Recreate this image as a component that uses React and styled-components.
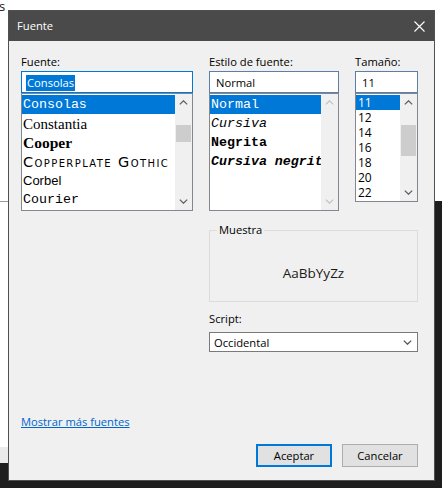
import React from 'react';
import styled, { createGlobalStyle } from 'styled-components';

const UI = '"Segoe UI", "Open Sans", "Noto Sans", sans-serif';
const MONO = '"Liberation Mono", "DejaVu Sans Mono", monospace';
const FS = 11.2;

const Global = createGlobalStyle`
  html, body { margin: 0; padding: 0; background: #fff; }
  body { font-family: ${UI}; font-size: ${FS}px; color: #000; }
`;

const Desktop = styled.div`
  position: relative;
  width: 442px;
  height: 488px;
  overflow: hidden;
  background:
    linear-gradient(#1e1e1e, #1e1e1e) 435px 201px / 7px 287px no-repeat,
    linear-gradient(#1e1e1e, #1e1e1e) 0 463px / 442px 25px no-repeat,
    linear-gradient(#ebebeb, #ebebeb) 0 447px / 8px 16px no-repeat,
    linear-gradient(#9a9a9a, #9a9a9a) 0 201px / 8px 1px no-repeat,
    #fff;
`;

const BehindText = styled.span`
  position: absolute;
  left: -1px;
  top: -3px;
  font: 13px ${UI};
  color: #111;
`;

const Dialog = styled.div`
  position: absolute;
  left: 8px;
  top: 10px;
  width: 427px;
  height: 471px;
  box-sizing: border-box;
  border: 1px solid #505050;
  background: #f0f0f0;
  display: flex;
  flex-direction: column;
`;

const TitleBar = styled.div`
  height: 30px;
  flex: none;
  background: #4a4a4a;
  color: #fff;
  display: flex;
  align-items: center;
  justify-content: space-between;
  padding: 0 9px 0 8px;
`;

const Title = styled.span`
  font-size: ${FS}px;
  line-height: 16px;
`;

const Body = styled.div`
  flex: 1;
  display: flex;
  flex-direction: column;
  padding: 13px 16px 12px 12px;
  min-height: 0;
`;

const Columns = styled.div`
  display: grid;
  grid-template-columns: 172px 130px 63px;
  column-gap: 16px;
  align-items: start;
`;

const Field = styled.div`
  display: flex;
  flex-direction: column;
`;

const Label = styled.div`
  line-height: 16px;
  height: 16px;
  margin-top: ${(p) => p.$top || 0}px;
  margin-bottom: ${(p) => (p.$gap == null ? 1 : p.$gap)}px;
  white-space: nowrap;
`;

const TextBox = styled.div`
  height: 22px;
  box-sizing: border-box;
  border: 1px solid ${(p) => (p.$focus ? '#0078d7' : '#5b7fa6')};
  background: #fff;
  display: flex;
  align-items: center;
  padding-left: ${(p) => p.$pad}px;
  padding-top: 1px;
  line-height: 16px;
  white-space: nowrap;
`;

const Hilite = styled.span`
  background: #0078d7;
  color: #fff;
  padding: 0 1px;
`;

const ListBox = styled.div`
  height: ${(p) => p.$h}px;
  box-sizing: border-box;
  border: 1px solid #828790;
  background: #fff;
  display: flex;
`;

const Items = styled.div`
  flex: 1;
  min-width: 0;
  overflow: hidden;
  padding-top: 1px;
`;

const Item = styled.div`
  height: ${(p) => p.$h}px;
  line-height: ${(p) => p.$h + 1}px;
  white-space: nowrap;
  overflow: hidden;
  padding-left: ${(p) => p.$pad}px;
  background: ${(p) => (p.$sel ? '#0078d7' : 'transparent')};
  color: ${(p) => (p.$sel ? '#fff' : '#000')};
  font-family: ${(p) => p.$family || UI};
  font-size: ${(p) => p.$size || FS}px;
  font-weight: ${(p) => p.$weight || 400};
  font-style: ${(p) => (p.$italic ? 'italic' : 'normal')};
  font-variant: ${(p) => (p.$caps ? 'small-caps' : 'normal')};
  letter-spacing: ${(p) => p.$spacing || 0}px;
`;

const ScrollBar = styled.div`
  width: 17px;
  flex: none;
  background: #f0f0f0;
  display: flex;
  flex-direction: column;
`;

const Arrow = styled.div`
  height: 17px;
  flex: none;
  display: flex;
  align-items: center;
  justify-content: center;
`;

const Track = styled.div`
  flex: 1;
  display: flex;
  flex-direction: column;
`;

const Thumb = styled.div`
  margin: ${(p) => p.$top}px 1px 0;
  height: ${(p) => p.$h}px;
  background: #cdcdcd;
`;

const RightPanel = styled.div`
  margin-left: 188px;
  width: 209px;
  display: flex;
  flex-direction: column;
`;

const Group = styled.fieldset`
  margin: 11px 0 0;
  padding: 0;
  height: 80px;
  box-sizing: border-box;
  border: 1px solid #dcdcdc;
  min-width: 0;
`;

const Legend = styled.legend`
  margin-left: 7px;
  padding: 0 2px;
  line-height: 16px;
  font-size: ${FS}px;
`;

const Sample = styled.div`
  text-align: center;
  font-size: 13.5px;
  line-height: 20px;
  padding-top: 25px;
  color: #1a1a1a;
`;

const Select = styled.div`
  height: 20px;
  box-sizing: border-box;
  border: 1px solid #7a7a7a;
  background: #fff;
  display: flex;
  align-items: center;
  justify-content: space-between;
  padding: 1px 5px 0 4px;
  line-height: 16px;
`;

const Link = styled.a`
  margin-top: auto;
  align-self: flex-start;
  color: #0066cc;
  text-decoration: underline;
  line-height: 16px;
  cursor: pointer;
`;

const Buttons = styled.div`
  display: flex;
  justify-content: flex-end;
  gap: 10px;
  margin-top: 14px;
  margin-bottom: 1px;
`;

const Button = styled.button`
  width: 76px;
  height: 23px;
  box-sizing: border-box;
  margin: 0;
  padding: 0;
  font: ${FS}px ${UI};
  color: #000;
  background: #e1e1e1;
  border: ${(p) => (p.$default ? '2px solid #0078d7' : '1px solid #adadad')};
`;

const Chevron = ({ up, color = '#606060' }) => (
  <svg width="9" height="5" viewBox="0 0 9 5">
    <path
      d={up ? 'M0.8 4.4 L4.5 0.8 L8.2 4.4' : 'M0.8 0.6 L4.5 4.2 L8.2 0.6'}
      fill="none"
      stroke={color}
      strokeWidth="1.3"
    />
  </svg>
);

const Scroll = ({ thumb, disabled }) => {
  const c = disabled ? '#c2c2c2' : '#606060';
  return (
    <ScrollBar>
      <Arrow>
        <Chevron up color={c} />
      </Arrow>
      <Track>{thumb && <Thumb $top={thumb[0]} $h={thumb[1]} />}</Track>
      <Arrow>
        <Chevron color={c} />
      </Arrow>
    </ScrollBar>
  );
};

const fonts = [
  { t: 'Consolas', $family: MONO, $size: 13.3, $sel: true },
  { t: 'Constantia', $family: '"Liberation Serif", serif', $size: 15 },
  { t: 'Cooper', $family: '"Liberation Serif", serif', $size: 15.5, $weight: 900 },
  { t: 'Copperplate Gothic', $family: '"DejaVu Sans", sans-serif', $size: 14.5, $caps: true, $spacing: 1.4 },
  { t: 'Corbel', $family: '"Liberation Sans", sans-serif', $size: 13 },
  { t: 'Courier', $family: MONO, $size: 13.3 },
];

const styles = [
  { t: 'Normal', $sel: true },
  { t: 'Cursiva', $italic: true },
  { t: 'Negrita', $weight: 700 },
  { t: 'Cursiva negrita', $italic: true, $weight: 700 },
];

const sizes = ['11', '12', '14', '16', '18', '20', '22'];

export default function App() {
  return (
    <>
      <Global />
      <Desktop>
        <BehindText>s</BehindText>
        <Dialog>
          <TitleBar>
            <Title>Fuente</Title>
            <svg width="11" height="11" viewBox="0 0 11 11">
              <path d="M0.5 0.5 L10.5 10.5 M10.5 0.5 L0.5 10.5" stroke="#fff" strokeWidth="1.1" />
            </svg>
          </TitleBar>
          <Body>
            <Columns>
              <Field>
                <Label>Fuente:</Label>
                <TextBox $focus $pad={4}>
                  <Hilite>Consolas</Hilite>
                </TextBox>
                <ListBox $h={118}>
                  <Items>
                    {fonts.map(({ t, ...p }) => (
                      <Item key={t} $h={19} $pad={1} {...p}>
                        {t}
                      </Item>
                    ))}
                  </Items>
                  <Scroll thumb={[14, 17]} />
                </ListBox>
              </Field>
              <Field>
                <Label>Estilo de fuente:</Label>
                <TextBox $pad={6}>Normal</TextBox>
                <ListBox $h={118}>
                  <Items>
                    {styles.map(({ t, ...p }) => (
                      <Item key={t} $h={19} $pad={1} $family={MONO} $size={13.3} {...p}>
                        {t}
                      </Item>
                    ))}
                  </Items>
                  <Scroll disabled />
                </ListBox>
              </Field>
              <Field>
                <Label>Tamaño:</Label>
                <TextBox $pad={6}>11</TextBox>
                <ListBox $h={109}>
                  <Items>
                    {sizes.map((s, i) => (
                      <Item key={s} $h={15} $pad={2} $size={12} $sel={i === 0}>
                        {s}
                      </Item>
                    ))}
                  </Items>
                  <Scroll thumb={[14, 31]} />
                </ListBox>
              </Field>
            </Columns>
            <RightPanel>
              <Group>
                <Legend>Muestra</Legend>
                <Sample>AaBbYyZz</Sample>
              </Group>
              <Label $top={9} $gap={5}>
                Script:
              </Label>
              <Select>
                <span>Occidental</span>
                <Chevron color="#555" />
              </Select>
            </RightPanel>
            <Link>Mostrar más fuentes</Link>
            <Buttons>
              <Button $default>Aceptar</Button>
              <Button>Cancelar</Button>
            </Buttons>
          </Body>
        </Dialog>
      </Desktop>
    </>
  );
}
